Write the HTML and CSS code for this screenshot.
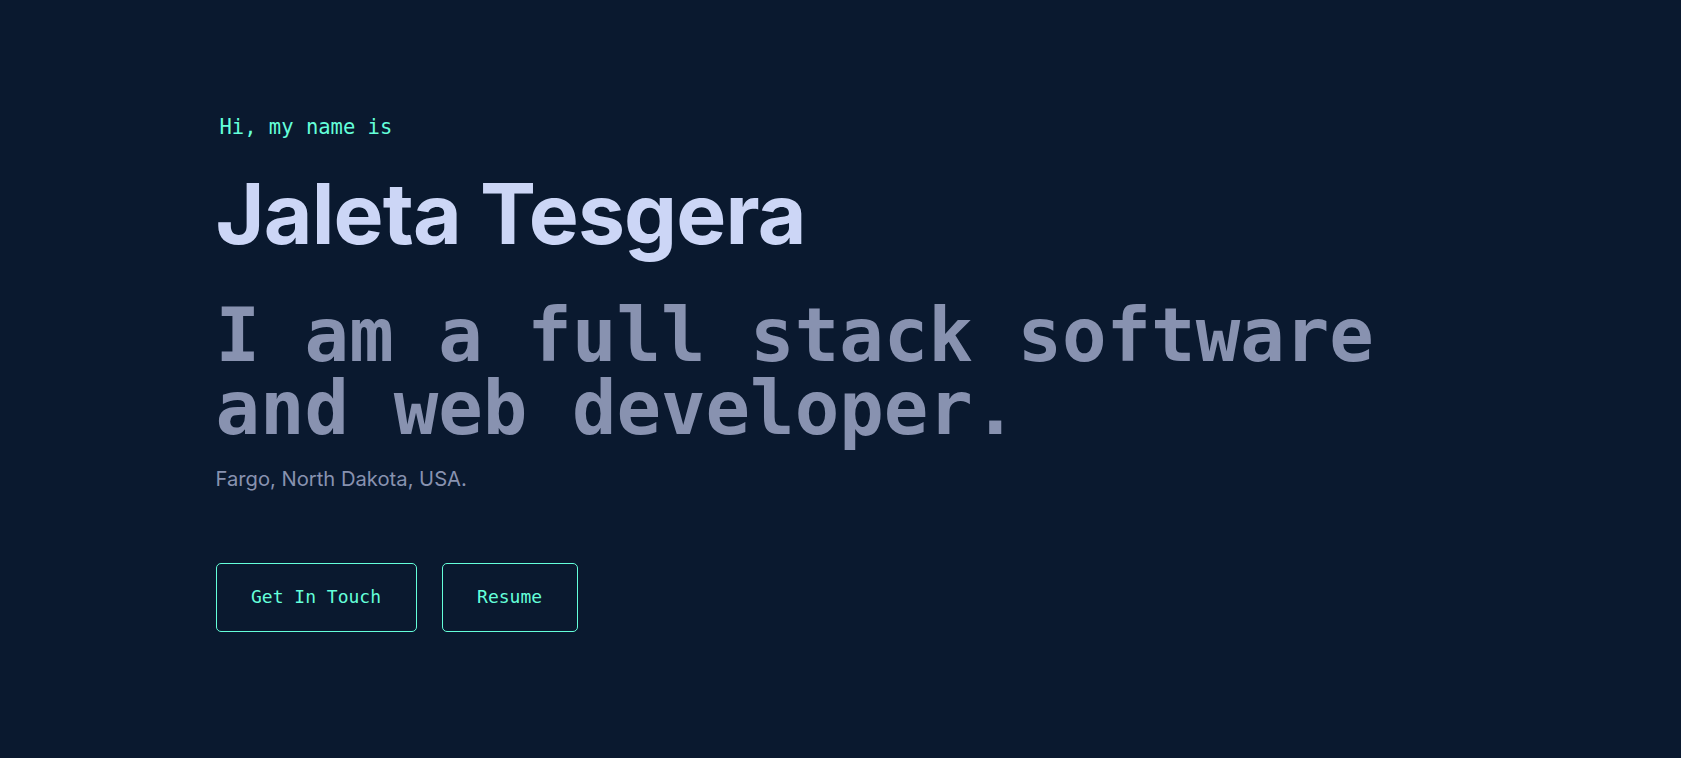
FILE: index.html
```html
<!DOCTYPE html>
<html lang="en">
<head>
<meta charset="utf-8">
<title>Jaleta Tesgera</title>
<link rel="stylesheet" href="styles.css">
</head>
<body>
<main class="page">
  <section class="hero">
    <p class="hero-intro">Hi, my name is</p>
    <h1 class="hero-name">Jaleta Tesgera</h1>
    <h2 class="hero-tagline">I am a full stack software and web developer.</h2>
    <p class="hero-location">Fargo, North Dakota, USA.</p>
    <div class="hero-actions">
      <a class="btn" href="#contact">Get In Touch</a>
      <a class="btn" href="#resume">Resume</a>
    </div>
  </section>
</main>
</body>
</html>
```
FILE: styles.css
```css
html, body {
  margin: 0;
  padding: 0;
  background: #0a192f;
  height: 100%;
}

body {
  font-family: "Inter", "Liberation Sans", sans-serif;
  color: #8892b0;
}

.page {
  max-width: 1250px;
  margin: 0 auto;
  padding-top: 117px;
}

.hero {
  display: flex;
  flex-direction: column;
  align-items: flex-start;
}

.hero-intro {
  margin: 0;
  font-family: "DejaVu Sans Mono", monospace;
  font-size: 20.5px;
  line-height: 1;
  color: #64ffda;
  padding-left: 4px;
}

.hero-name {
  margin: 30px 0 0;
  font-family: "Inter", "Liberation Sans", sans-serif;
  font-weight: 700;
  font-size: 84px;
  line-height: 1.1;
  letter-spacing: -0.85px;
  color: #ccd6f6;
}

.hero-tagline {
  margin: 39px 0 0;
  font-family: "DejaVu Sans Mono", monospace;
  font-weight: 700;
  font-size: 74px;
  line-height: 73px;
  color: #8892b0;
  max-width: 1200px;
}

.hero-location {
  margin: 21.5px 0 0;
  font-family: "Inter", "Liberation Sans", sans-serif;
  font-size: 20.2px;
  line-height: 1.3;
  color: #8892b0;
}

.hero-actions {
  display: flex;
  gap: 25px;
  margin-top: 70px;
}

.btn {
  display: inline-block;
  font-family: "DejaVu Sans Mono", monospace;
  font-size: 18px;
  line-height: 1;
  color: #64ffda;
  text-decoration: none;
  border: 1px solid #64ffda;
  border-radius: 5px;
  padding: 24.5px 34.5px;
}
```
